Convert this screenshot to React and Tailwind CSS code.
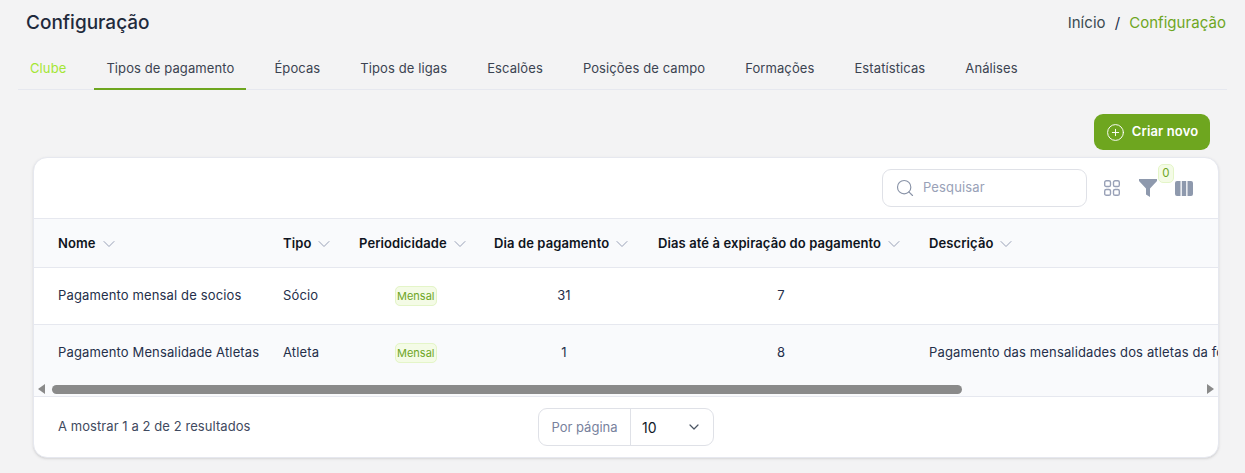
import React from "react";
import { ChevronDown, CirclePlus, Search } from "lucide-react";

const tabs = ["Clube", "Tipos de pagamento", "Épocas", "Tipos de ligas", "Escalões", "Posições de campo", "Formações", "Estatísticas", "Análises"];

const columns = [
  { label: "Nome", width: "w-[225px]" },
  { label: "Tipo", width: "w-[76px]" },
  { label: "Periodicidade", width: "w-[135px]" },
  { label: "Dia de pagamento", width: "w-[164px]" },
  { label: "Dias até à expiração do pagamento", width: "w-[271px]" },
  { label: "Descrição", width: "w-[289px]" },
];

const rows = [
  { nome: "Pagamento mensal de socios", tipo: "Sócio", dia: "31", dias: "7", descricao: "" },
  { nome: "Pagamento Mensalidade Atletas", tipo: "Atleta", dia: "1", dias: "8", descricao: "Pagamento das mensalidades dos atletas da formação" },
];

export default function App() {
  return (
    <div className="h-[473px] w-[1245px] overflow-hidden bg-[#f3f3f4] font-['Inter',sans-serif] text-[13px] tracking-[0.14px] text-[#252f4a]">
      <div className="flex h-[45px] items-center justify-between pl-[26px] pr-[19px]">
        <h1 className="text-[19px] font-medium leading-none tracking-normal text-[#1f2a3c]">Configuração</h1>
        <div className="flex gap-[9px] text-[15px] leading-none tracking-[0.05px]">
          <span className="text-[#3a4a50]">Início</span>
          <span>/</span>
          <span className="text-[#6ea61f]">Configuração</span>
        </div>
      </div>

      <div className="mx-[18px] flex h-[45px] gap-4 border-b border-[#e6e8ef] tracking-[0.1px]">
        {tabs.map((tab, i) => (
          <div
            key={tab}
            className={`-mb-px flex items-center border-b-2 px-3 pt-[4px] ${i === 1 ? "border-[#6ea61f]" : "border-transparent"} ${i === 0 ? "text-[#a3e635]" : "text-[#3b4351]"}`}
          >
            {tab}
          </div>
        ))}
      </div>

      <div className="flex justify-end pr-[35px] pt-[24px]">
        <button className="flex h-[36px] w-[116px] items-center justify-center gap-[7px] rounded-[9px] bg-[#6ea61f] font-semibold text-white">
          <CirclePlus size={19} strokeWidth={1.2} />
          Criar novo
        </button>
      </div>

      <div className="mx-[33px] mt-[7px] h-[301px] w-[1186px] overflow-hidden rounded-[14px] border border-[#e6e8ef] bg-white shadow-sm">
        <div className="flex h-[60px] items-center justify-end pr-[25px]">
          <div className="flex h-[38px] w-[205px] items-center gap-[8px] rounded-[9px] border border-[#dfe1e7] pl-[12px] text-[#99a1b7]">
            <Search size={20} strokeWidth={1.4} className="text-[#8a94a8]" />
            Pesquisar
          </div>
          <svg width="16" height="16" viewBox="0 0 16 16" fill="none" className="ml-[17px] stroke-[#99a1b7]" strokeWidth="1.4">
            <rect x="0.7" y="0.7" width="5.8" height="5.8" rx="1.6" />
            <rect x="9.5" y="0.7" width="5.8" height="5.8" rx="1.6" />
            <rect x="0.7" y="9.5" width="5.8" height="5.8" rx="1.6" />
            <rect x="9.5" y="9.5" width="5.8" height="5.8" rx="1.6" />
          </svg>
          <div className="relative ml-[19px]">
            <svg width="18" height="18" viewBox="0 0 18 18" className="block fill-[#8e99ad]">
              <path d="M0 0h18v2L11 9.5V18L7 15.5v-6L0 2z" />
            </svg>
            <span className="absolute -top-[15px] left-[19px] flex h-[19px] w-[16px] items-center justify-center rounded-[5px] border border-[#e4f5c8] bg-[#f4fbe6] text-[11.5px] text-[#6ea61f]">0</span>
          </div>
          <svg width="18" height="15" viewBox="0 0 18 15" className="ml-[18px] fill-[#8e99ad]">
            <path d="M2 0h3.5v15H2a2 2 0 0 1-2-2V2a2 2 0 0 1 2-2zM6.8 0h4.4v15H6.8zM12.5 0H16a2 2 0 0 1 2 2v11a2 2 0 0 1-2 2h-3.5z" />
          </svg>
        </div>

        <div className="overflow-hidden">
          <div className="flex h-[50px] w-[1184px] items-center border-y border-[#e6e8ef] bg-[#f9fafc] pl-[24px] pt-[1px] font-semibold tracking-[0.1px] text-[#0f1420]">
            {columns.map((col) => (
              <div key={col.label} className={`flex shrink-0 items-center gap-[3px] ${col.width}`}>
                {col.label}
                <ChevronDown size={20} strokeWidth={1.2} className="text-[#99a1b7]" />
              </div>
            ))}
          </div>

          {rows.map((row, i) => (
            <div key={row.nome} className={`flex h-[57px] items-center whitespace-nowrap pl-[24px] ${i === 0 ? "border-b border-[#e6e8ef]" : "bg-[#f9fafc] pb-[1px]"}`}>
              <div className="w-[225px] shrink-0">{row.nome}</div>
              <div className="w-[76px] shrink-0">{row.tipo}</div>
              <div className="w-[135px] shrink-0 pl-[36px]">
                <span className="rounded-[5px] border border-[#e4f5c8] bg-[#f4fbe6] px-px py-[2px] text-[11px] tracking-normal text-[#6ea61f]">Mensal</span>
              </div>
              <div className="w-[164px] shrink-0 pr-[24px] text-center">{row.dia}</div>
              <div className="w-[271px] shrink-0 pr-[25px] text-center">{row.dias}</div>
              <div className="w-[289px] shrink-0 overflow-hidden">{row.descricao}</div>
            </div>
          ))}

          <div className="flex h-[15px] items-center border-b border-[#e6e8ef] bg-[#f9fafc] px-[4px]">
            <div className="h-0 w-0 border-y-[5px] border-r-[7px] border-y-transparent border-r-[#8a8a8a]" />
            <div className="ml-[7px] h-[9px] w-[910px] rounded-full bg-[#8a8a8a]" />
            <div className="ml-auto h-0 w-0 border-y-[5px] border-l-[7px] border-y-transparent border-l-[#8a8a8a]" />
          </div>
        </div>

        <div className="relative flex h-[60px] items-center pl-[24px] tracking-[0.07px] text-[#3f4a60]">
          A mostrar 1 a 2 de 2 resultados
          <div className="absolute left-[504px] top-[11px] flex h-[38px] w-[176px] items-center rounded-[9px] border border-[#dfe1e7]">
            <span className="w-[92px] border-r border-[#dfe1e7] text-center leading-[36px] tracking-normal text-[#78829d]">Por página</span>
            <span className="pl-[11px] text-[14px] text-[#111827]">10</span>
            <ChevronDown size={16} strokeWidth={1.8} className="ml-auto mr-[11px] text-[#4b5563]" />
          </div>
        </div>
      </div>
    </div>
  );
}
